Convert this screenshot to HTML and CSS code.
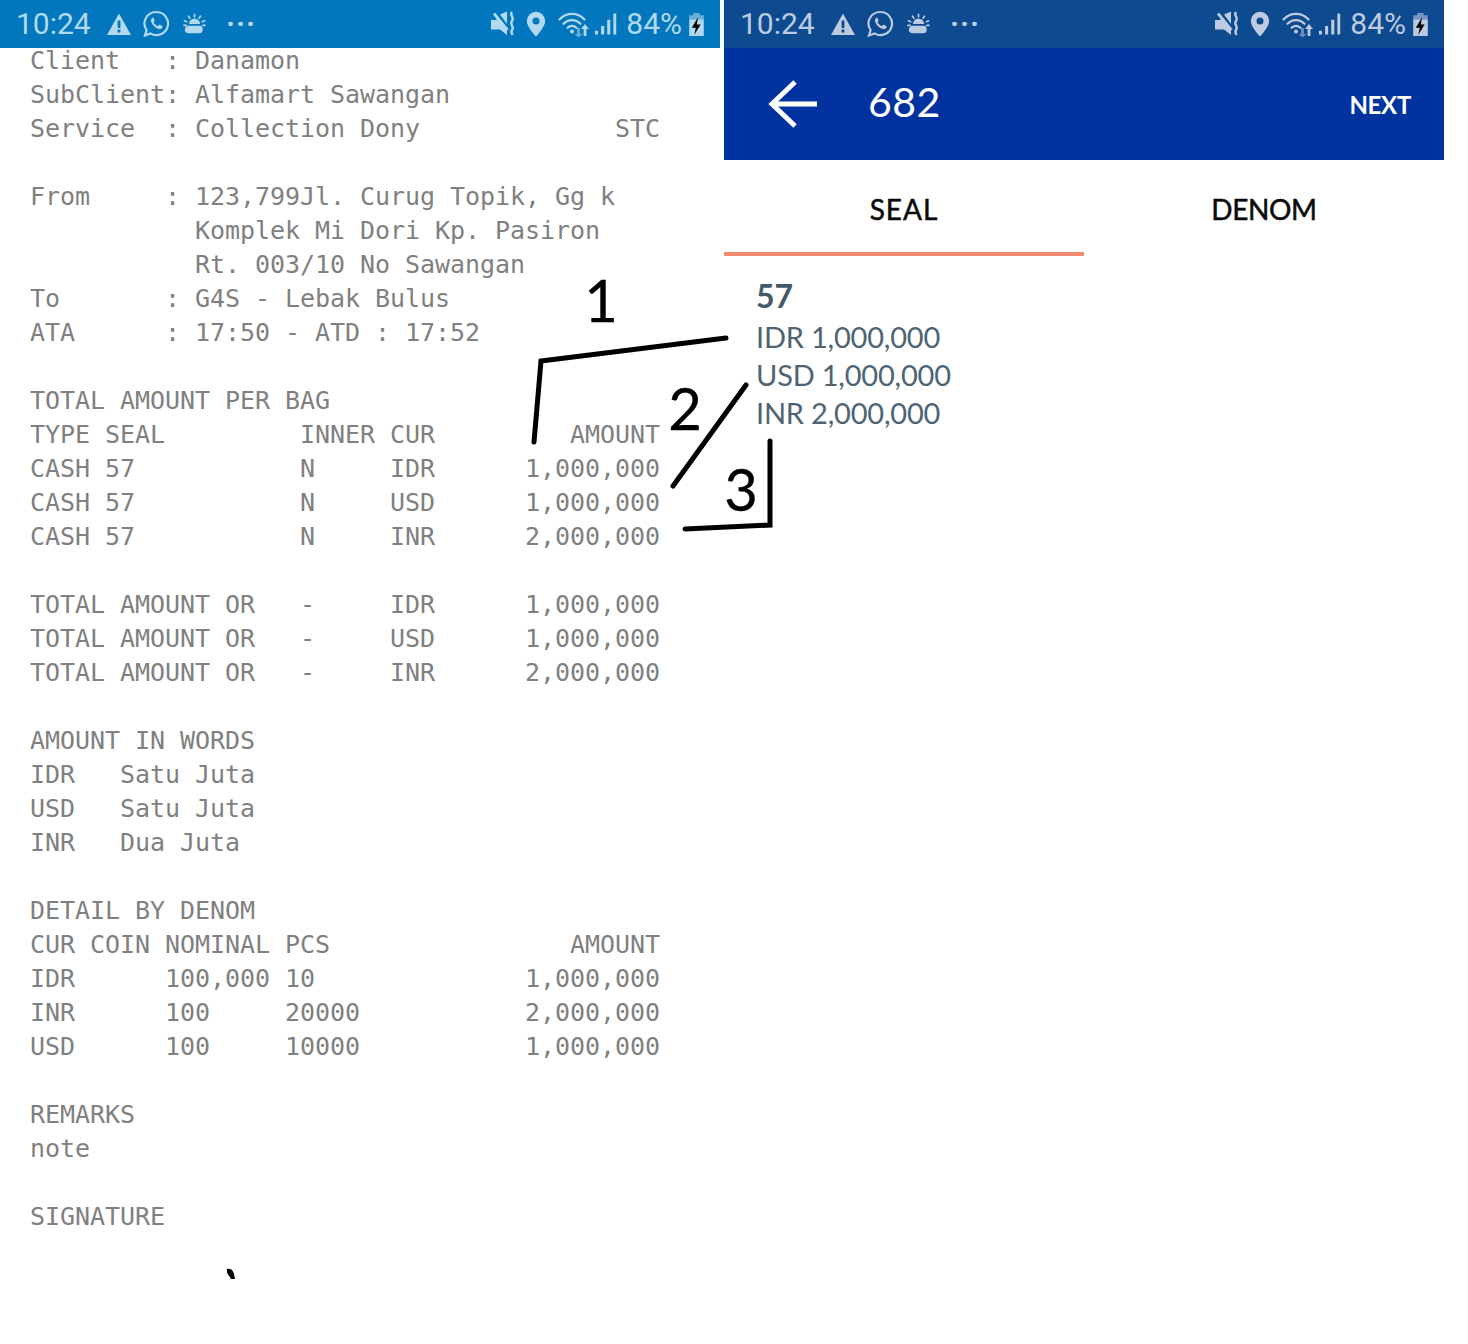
FILE: index.html
```html
<!DOCTYPE html>
<html lang="en">
<head>
<meta charset="utf-8">
<title>Receipt and seal detail</title>
<link rel="stylesheet" href="styles.css">
</head>
<body>
<svg class="defs" width="0" height="0" aria-hidden="true">
  <defs>
    <symbol id="i-warn" viewBox="0 0 26 24"><path fill="currentColor" fill-rule="evenodd" d="M13 1.500L25 23H1ZM11.600 8.500v7.500h2.800V8.500ZM11.600 17.600v2.900h2.800v-2.900Z"/></symbol>
    <symbol id="i-wa" viewBox="0 0 28 28"><path fill="none" stroke="currentColor" stroke-width="2.200" d="M14 1.500a12 12 0 1 1-6.200 22.300L2 26l1.800-5.600A12 12 0 0 1 14 1.500Z"/><path fill="currentColor" d="M9.800 7.500c-1.600 1.200-1.900 3.200-.9 5.300 1.300 2.800 3.700 5 6.500 6.100 2.100.8 3.900.4 4.800-1.200.4-.8.300-1.300-.3-1.600l-2.400-1.200c-.6-.3-1-.1-1.400.4l-.8 1c-1.800-.7-3.500-2.200-4.400-4l.8-.9c.4-.4.4-.8.200-1.300l-1-2.300c-.3-.6-.8-.7-1.100-.3Z"/></symbol>
    <symbol id="i-sun" viewBox="0 0 26 24"><g fill="none" stroke="currentColor" stroke-width="1.800" stroke-linecap="round"><path d="M13 1.500v2.500M6.500 3.500l1.500 2.200M19.500 3.500L18 5.700M2 8.500l2.500 1M24 8.500l-2.500 1M1.500 13.500H4M22 13.500h2.500"/></g><path fill="currentColor" d="M7 12a6 6 0 0 1 12 0ZM7 14h13a4.500 4.500 0 0 1 2 4 4 4 0 0 1-4 4H6a3.800 3.800 0 0 1-3.500-4A4 4 0 0 1 7 14Z"/></symbol>
    <symbol id="i-mute" viewBox="0 0 26 26"><path fill="currentColor" d="M1 9h5l2-2 9 10v7l-7-5.500H1ZM3 3.500L5 1.500 18.500 18 16.500 20ZM10 3.500l7-3V13Z"/><path fill="none" stroke="currentColor" stroke-width="2.400" d="M22 1c-3 3.500 3 5.500 0 9s3 5.500 0 9c-1 1.500-.6 3 .6 5"/></symbol>
    <symbol id="i-pin" viewBox="0 0 20 26"><path fill="currentColor" fill-rule="evenodd" d="M10 .800a9.200 9.200 0 0 1 9.200 9.200C19.200 16 10 25.500 10 25.500S.8 16 .8 10A9.200 9.200 0 0 1 10 .8ZM10 6.500a3.500 3.500 0 1 0 0 7 3.500 3.500 0 0 0 0-7Z"/></symbol>
    <symbol id="i-wifi" viewBox="0 0 32 26"><g fill="none" stroke="currentColor" stroke-width="2.200" stroke-linecap="round"><path d="M1.500 8.500c7-7.500 18-7.500 25 0M5.500 12.800c5-5 12-5 17 0M9.500 16.800c3-2.700 6-2.700 9 0"/></g><circle cx="14" cy="20.500" r="2" fill="currentColor"/><path fill="currentColor" d="M27 13l4 5h-2.600v7h-2.800v-7H23Z"/><path fill="currentColor" opacity=".55" d="M19 17h3v6h2.500l-4 3.500-4-3.500H19Z"/></symbol>
    <symbol id="i-signal" viewBox="0 0 24 24"><path fill="currentColor" d="M1 19h3.200v4H1ZM7.400 14h3.200v9H7.400ZM13.800 7.500H17V23h-3.200ZM20.200 1h3v22h-3Z"/></symbol>
    <symbol id="i-batt" viewBox="0 0 16 24"><path fill="currentColor" opacity=".6" d="M5 1h6v2h4v4H1V3h4Z"/><path fill="currentColor" d="M1 7h14v16H1Z"/><path class="bolt" d="M9.500 5 3.500 15h3.800L5.800 22 12 12H8.300Z"/></symbol>
  </defs>
</svg>

<main class="screens">
  <section class="phone">
    <header class="status status-light">
      <div class="status-left">
        <span class="clock">10:24</span>
        <svg class="ic ic-warn"><use href="#i-warn"/></svg>
        <svg class="ic ic-wa"><use href="#i-wa"/></svg>
        <svg class="ic ic-sun"><use href="#i-sun"/></svg>
        <span class="dots">···</span>
      </div>
      <div class="status-right">
        <svg class="ic ic-mute"><use href="#i-mute"/></svg>
        <svg class="ic ic-pin"><use href="#i-pin"/></svg>
        <svg class="ic ic-wifi"><use href="#i-wifi"/></svg>
        <svg class="ic ic-signal"><use href="#i-signal"/></svg>
        <span class="pct">84%</span>
        <svg class="ic ic-batt"><use href="#i-batt"/></svg>
      </div>
    </header>
    <pre class="receipt">Client   : Danamon
SubClient: Alfamart Sawangan
Service  : Collection Dony             STC

From     : 123,799Jl. Curug Topik, Gg k
           Komplek Mi Dori Kp. Pasiron
           Rt. 003/10 No Sawangan
To       : G4S - Lebak Bulus
ATA      : 17:50 - ATD : 17:52

TOTAL AMOUNT PER BAG
TYPE SEAL         INNER CUR         AMOUNT
CASH 57           N     IDR      1,000,000
CASH 57           N     USD      1,000,000
CASH 57           N     INR      2,000,000

TOTAL AMOUNT OR   -     IDR      1,000,000
TOTAL AMOUNT OR   -     USD      1,000,000
TOTAL AMOUNT OR   -     INR      2,000,000

AMOUNT IN WORDS
IDR   Satu Juta
USD   Satu Juta
INR   Dua Juta

DETAIL BY DENOM
CUR COIN NOMINAL PCS                AMOUNT
IDR      100,000 10              1,000,000
INR      100     20000           2,000,000
USD      100     10000           1,000,000

REMARKS
note

SIGNATURE</pre>
  </section>

  <section class="phone">
    <header class="status status-dark">
      <div class="status-left">
        <span class="clock">10:24</span>
        <svg class="ic ic-warn"><use href="#i-warn"/></svg>
        <svg class="ic ic-wa"><use href="#i-wa"/></svg>
        <svg class="ic ic-sun"><use href="#i-sun"/></svg>
        <span class="dots">···</span>
      </div>
      <div class="status-right">
        <svg class="ic ic-mute"><use href="#i-mute"/></svg>
        <svg class="ic ic-pin"><use href="#i-pin"/></svg>
        <svg class="ic ic-wifi"><use href="#i-wifi"/></svg>
        <svg class="ic ic-signal"><use href="#i-signal"/></svg>
        <span class="pct">84%</span>
        <svg class="ic ic-batt"><use href="#i-batt"/></svg>
      </div>
    </header>
    <div class="appbar">
      <svg class="back" viewBox="0 0 50 48"><path fill="none" stroke="currentColor" stroke-width="5" d="M49 24H4M27 2 4 24l23 22"/></svg>
      <h1 class="title">682</h1>
      <span class="next">NEXT</span>
    </div>
    <nav class="tabs">
      <span class="tab tab-active">SEAL</span>
      <span class="tab tab-idle">DENOM</span>
    </nav>
    <div class="seal">
      <div class="seal-no">57</div>
      <div class="seal-line">IDR 1,000,000</div>
      <div class="seal-line">USD 1,000,000</div>
      <div class="seal-line">INR 2,000,000</div>
    </div>
  </section>
</main>

<svg class="marks" viewBox="0 0 1468 1344" width="1468" height="1344">
  <g class="strokes">
    <path d="M726 338 541 361 534 442"/>
    <path d="M746 385 673 486"/>
    <path d="M770 441V525L685 529"/>
  </g>
  <path class="blot" d="M227 1269c3-1 6 1 7 5l1 5-4 0c-1-3-5-5-4-10Z"/>
  <text class="num" x="601" y="322">1</text>
  <text class="num" x="685" y="430">2</text>
  <text class="num" x="741" y="511">3</text>
</svg>
</body>
</html>
```
FILE: styles.css
```css
* { box-sizing: border-box; }
html, body { margin: 0; padding: 0; background: #fff; }
body { position: relative; width: 1468px; height: 1344px; overflow: hidden; }
.defs { position: absolute; }
.screens { display: flex; gap: 4px; width: 1444px; height: 1344px; }
.phone { position: relative; width: 720px; height: 1344px; overflow: hidden; }

.status {
  position: relative;
  z-index: 2;
  height: 48px;
  display: flex;
  justify-content: space-between;
  align-items: center;
  padding: 0 15px 0 16px;
  font-family: Roboto, "Liberation Sans", sans-serif;
}
.status-light { background: #0277bd; color: #b3d9f0; }
.status-dark { background: #0d4a8f; color: #bccbe0; }
.status-left, .status-right { display: flex; align-items: center; }
.clock { font-size: 30px; line-height: 48px; width: 90px; }
.pct { font-size: 30px; line-height: 48px; margin-left: 9px; }
.dots { font-size: 30px; font-weight: 700; letter-spacing: 1px; margin-left: 19px; line-height: 48px; position: relative; }
.ic { display: block; flex: none; }
.ic-warn { width: 26px; height: 24px; }
.ic-wa { width: 27px; height: 28px; margin-left: 11px; }
.ic-sun { width: 25px; height: 22px; margin-left: 12px; }
.ic-mute { width: 26px; height: 26px; }
.ic-pin { width: 20px; height: 26px; margin-left: 10px; }
.ic-wifi { width: 34px; height: 26px; margin-left: 11px; }
.ic-signal { width: 23px; height: 24px; margin-left: 3px; }
.ic-batt { width: 17px; height: 25px; margin-left: 6px; }
.status-light .bolt { fill: #0b3555; }
.status-dark .bolt { fill: #0b2a50; }

.receipt {
  margin: -4px 0 0;
  padding-left: 30px;
  font-family: "DejaVu Sans Mono", "Liberation Mono", monospace;
  font-size: 25px;
  letter-spacing: -0.05px;
  line-height: 34px;
  color: #808080;
}

.appbar {
  height: 112px;
  background: #0033a0;
  color: #fff;
  display: flex;
  align-items: center;
  padding: 0 33px 0 44px;
  font-family: Lato, "Open Sans", sans-serif;
}
.back { width: 50px; height: 48px; flex: none; }
.title { flex: 1; margin: 0 0 5px 50px; font-size: 41px; font-weight: 400; letter-spacing: 0.5px; }
.next { font-size: 24px; font-weight: 700; letter-spacing: -0.3px; }

.tabs { display: flex; height: 96px; font-family: Lato, "Open Sans", sans-serif; }
.tab {
  width: 360px;
  height: 96px;
  display: flex;
  align-items: center;
  justify-content: center;
  font-size: 28px;
  font-weight: 400;
  color: #0a0a0a;
  -webkit-text-stroke: 0.5px #0a0a0a;
}
.tab-active { border-bottom: 4px solid #f48b73; padding-top: 6px; letter-spacing: 1px; }
.tab-idle { padding-top: 2px; letter-spacing: -0.4px; }

.seal { padding: 21px 32px 0; font-family: Lato, "Open Sans", sans-serif; color: #4f6473; }
.seal-no { font-size: 32px; line-height: 38px; font-weight: 700; color: #455a68; margin-bottom: 3px; }
.seal-line { font-size: 29px; line-height: 38px; letter-spacing: -0.2px; }

.marks { position: absolute; left: 0; top: 0; pointer-events: none; }
.strokes path { fill: none; stroke: #000; stroke-width: 5; stroke-linecap: round; stroke-linejoin: miter; }
.blot { fill: #000; }
.num { font-family: Lato, "Open Sans", sans-serif; font-size: 58px; fill: #000; stroke: #000; stroke-width: 0.3px; text-anchor: middle; }
```
